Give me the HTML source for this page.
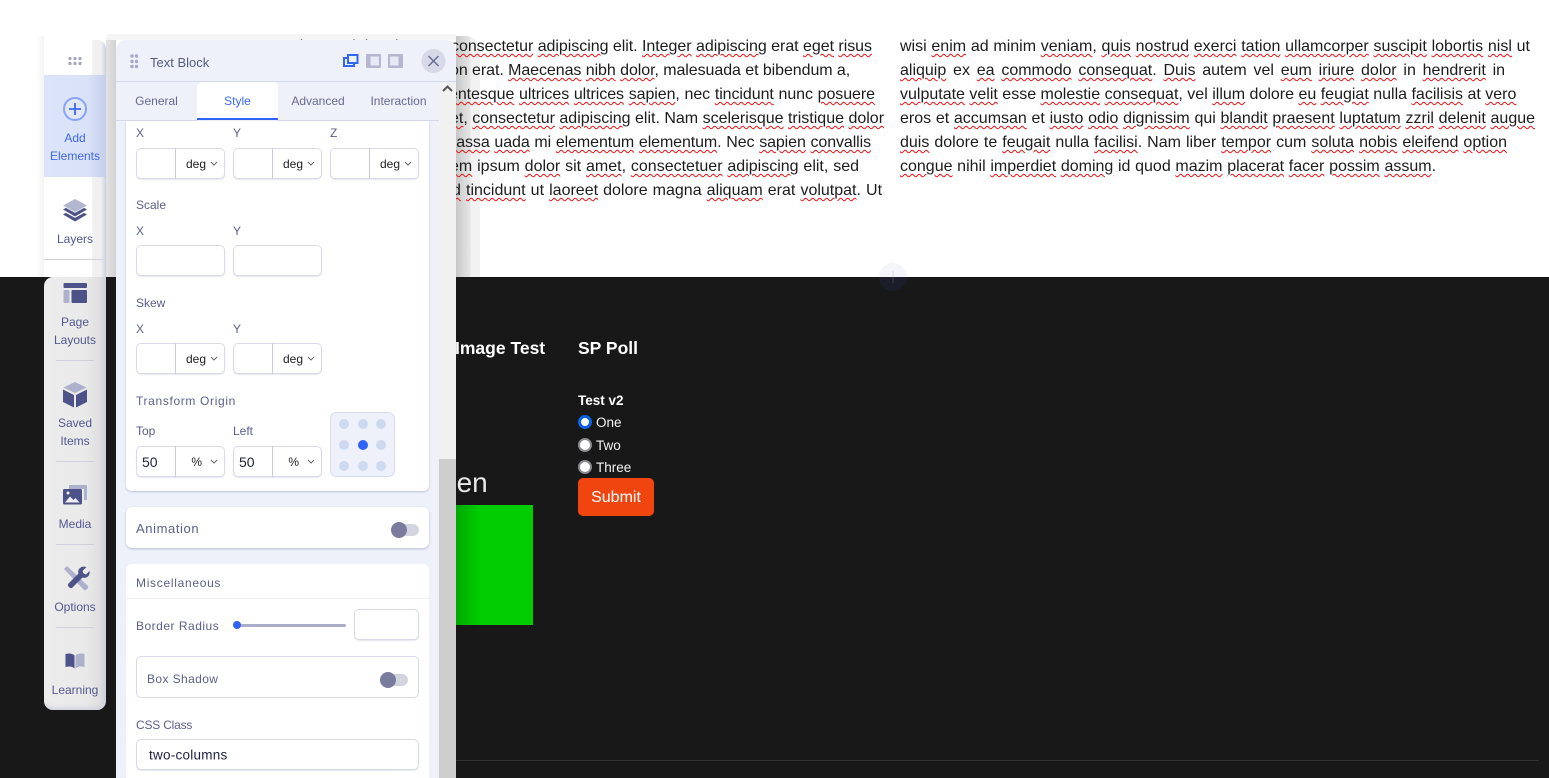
<!DOCTYPE html>
<html><head><meta charset="utf-8"><style>
*{box-sizing:border-box}
html,body{margin:0;padding:0;width:1549px;height:778px;overflow:hidden;background:#fff;font-family:"Liberation Sans",sans-serif}
.a{position:absolute}
.l{position:absolute;height:24px;line-height:24px;font-size:16px;color:#1c1c1c;white-space:nowrap;text-align:justify;text-align-last:justify}
u{text-decoration:underline wavy #e81010 1px;text-underline-offset:2px}
.lb{position:absolute;font-size:12px;line-height:14px;color:#5a5f8c;white-space:nowrap}
.in{position:absolute;background:#fff;border:1px solid #d9dae8;border-radius:5px;box-shadow:0 1px 1px #e6e7f0}
.in i{position:absolute;top:-1px;bottom:-1px;left:38px;width:1px;background:#c9cbdc}
.in b{position:absolute;right:18px;top:50%;transform:translateY(-50%);font:12px "Liberation Sans",sans-serif;color:#222}
.in span{position:absolute;left:5px;top:50%;transform:translateY(-50%);font-size:14px;color:#1c2140}
.in svg{position:absolute;right:6px;top:50%;margin-top:-3px}
.nav{position:absolute;left:44px;width:62px;text-align:center;font-size:12px;line-height:18px;color:#52588f}
.sep{position:absolute;left:56px;width:38px;height:1px;background:#cfd0de}
.tab{position:absolute;top:82px;height:38px;line-height:38px;text-align:center;font-size:12px;color:#666b90}
</style></head><body>
<div class="a" style="left:0;top:0;width:1549px;height:277px;background:#fff"></div>

<!-- dark section -->
<div class="a" style="left:0;top:277px;width:1549px;height:501px;background:#181818"></div>
<div class="a" style="left:879px;top:263px;width:28px;height:14px;border-radius:14px 14px 0 0;background:#f4f5fa"></div>
<div class="a" style="left:879px;top:277px;width:28px;height:14px;border-radius:0 0 14px 14px;background:#1b1e2a"></div>
<div class="a" style="left:892px;top:271px;width:2px;height:6px;background:#e6e8f0"></div>
<div class="a" style="left:892px;top:277px;width:2px;height:6px;background:#2c2e38"></div>
<div class="a" style="left:456px;top:760px;width:1083px;height:1px;background:#333"></div>
<div class="a" style="left:455px;top:337px;font-size:17.5px;line-height:22px;font-weight:bold;color:#fff;white-space:nowrap">Image Test</div>
<div class="a" style="left:578px;top:337px;font-size:17.5px;line-height:22px;font-weight:bold;color:#fff;white-space:nowrap">SP Poll</div>
<div class="a" style="left:578px;top:392px;font-size:13.5px;line-height:18px;font-weight:bold;color:#fff;white-space:nowrap">Test v2</div>
<div class="a" style="left:578px;top:415px;width:14px;height:14px;border-radius:50%;background:#fff;border:3px solid #0b62e0"></div>
<div class="a" style="left:578px;top:438px;width:14px;height:14px;border-radius:50%;background:#fff;border:2px solid #8a8a8f"></div>
<div class="a" style="left:578px;top:460px;width:14px;height:14px;border-radius:50%;background:#fff;border:2px solid #8a8a8f"></div>
<div class="a" style="left:596px;top:415px;font-size:13.5px;line-height:16px;color:#f4f4f4">One</div>
<div class="a" style="left:596px;top:438px;font-size:13.5px;line-height:16px;color:#f4f4f4">Two</div>
<div class="a" style="left:596px;top:460px;font-size:13.5px;line-height:16px;color:#f4f4f4">Three</div>
<div class="a" style="left:578px;top:478px;width:76px;height:38px;border-radius:5px;background:#f0450f;color:#fff;font-size:16px;line-height:39px;text-align:center">Submit</div>
<div class="a" style="left:399px;top:467px;font-size:28px;line-height:32px;color:#e8e8e8;white-space:nowrap">Screen</div>
<div class="a" style="left:400px;top:505px;width:133px;height:120px;background:linear-gradient(90deg,#00cc00 0,#00cc00 56px,#00a800 56px,#00b800 66px,#00cc00 78px)"></div>

<!-- shadows on the light part -->
<div class="a" style="left:456px;top:36px;width:24px;height:241px;border-radius:0 14px 0 0;background:linear-gradient(90deg,#c6c6c6,#d8d8d8 30%,#e6e6e6 60%,#f2f2f2 61%,#f2f2f2)"></div>
<div class="a" style="left:106px;top:34px;width:350px;height:6px;background:#f5f5f5"></div>
<div class="a" style="left:106px;top:40px;width:10px;height:237px;background:linear-gradient(90deg,#e2e2e2,#d2d2d2)"></div>
<div class="a" style="left:36px;top:36px;width:8px;height:241px;background:linear-gradient(90deg,#fff,#f3f3f3)"></div>

<!-- text columns -->
<div class="l" style="left:250px;top:35px;text-align-last:left">Lorem ipsum dolor sit amet,</div>
<div class="l" style="left:451px;width:421px;top:35px;letter-spacing:-.04px"><u>consectetur</u> <u>adipiscing</u> elit. <u>Integer</u> <u>adipiscing</u> erat <u>eget</u> <u>risus</u></div>
<div class="l" style="left:450px;width:400px;top:59px;letter-spacing:-.07px">on erat. <u>Maecenas</u> <u>nibh</u> <u>dolor</u>, malesuada et bibendum a,</div>
<div class="l" style="left:449px;width:426px;top:83px;letter-spacing:-.07px"><u>entesque</u> <u>ultrices</u> <u>ultrices</u> <u>sapien</u>, nec <u>tincidunt</u> nunc <u>posuere</u></div>
<div class="l" style="left:450px;width:434px;top:107px"><u>et</u>, <u>consectetur</u> <u>adipiscing</u> elit. Nam <u>scelerisque</u> <u>tristique</u> <u>dolor</u></div>
<div class="l" style="left:443px;width:428px;top:131px;letter-spacing:-.1px"><u>massa</u> <u>uada</u> mi <u>elementum</u> <u>elementum</u>. Nec <u>sapien</u> <u>convallis</u></div>
<div class="l" style="left:450px;width:409px;top:155px"><u>em</u> ipsum <u>dolor</u> sit <u>amet</u>, <u>consectetuer</u> <u>adipiscing</u> elit, sed</div>
<div class="l" style="left:452px;width:430px;top:179px"><u>d</u> <u>tincidunt</u> ut <u>laoreet</u> dolore magna <u>aliquam</u> erat <u>volutpat</u>. Ut</div>

<div class="l" style="left:900px;width:630px;top:35px">wisi <u>enim</u> ad minim <u>veniam</u>, <u>quis</u> <u>nostrud</u> <u>exerci</u> <u>tation</u> <u>ullamcorper</u> <u>suscipit</u> <u>lobortis</u> <u>nisl</u> ut</div>
<div class="l" style="left:900px;width:605px;top:59px"><u>aliquip</u> ex <u>ea</u> <u>commodo</u> <u>consequat</u>. <u>Duis</u> autem vel <u>eum</u> <u>iriure</u> <u>dolor</u> in <u>hendrerit</u> in</div>
<div class="l" style="left:900px;width:615px;top:83px"><u>vulputate</u> <u>velit</u> esse <u>molestie</u> <u>consequat</u>, vel <u>illum</u> dolore <u>eu</u> <u>feugiat</u> nulla <u>facilisis</u> at <u>vero</u></div>
<div class="l" style="left:900px;width:635px;top:107px">eros et <u>accumsan</u> et <u>iusto</u> <u>odio</u> <u>dignissim</u> qui <u>blandit</u> <u>praesent</u> <u>luptatum</u> <u>zzril</u> <u>delenit</u> <u>augue</u></div>
<div class="l" style="left:900px;width:607px;top:131px"><u>duis</u> dolore te <u>feugait</u> nulla <u>facilisi</u>. Nam liber <u>tempor</u> cum <u>soluta</u> <u>nobis</u> <u>eleifend</u> <u>option</u></div>
<div class="l" style="left:900px;width:536px;top:155px"><u>congue</u> nihil <u>imperdiet</u> <u>doming</u> id quod <u>mazim</u> <u>placerat</u> <u>facer</u> <u>possim</u> <u>assum</u>.</div>

<!-- left rail -->
<div class="a" style="left:44px;top:40px;width:62px;height:670px;border-radius:9px;background:linear-gradient(90deg,#ececec 0,#e9e9e9 70%,#dedede 90%,#c9cede 100%);box-shadow:inset 0 -5px 5px -3px #cdd0e0"></div>
<div class="a" style="left:44px;top:40px;width:62px;height:237px;background:linear-gradient(90deg,#fff 0,#fff 77%,#f1f1f1 78%,#efefef 92%,#c9d0e2 100%);border-radius:9px 9px 0 0"></div>
<div class="a" style="left:44px;top:277px;width:9px;height:9px;background:#181818"></div>
<div class="a" style="left:44px;top:277px;width:62px;height:24px;background:linear-gradient(90deg,#ececec 0,#e9e9e9 70%,#dedede 90%,#c9cede 100%);border-radius:9px 0 0 0"></div>
<div class="a" style="left:44px;top:75px;width:62px;height:102px;background:linear-gradient(90deg,#dbe4f9,#d9e2f7 70%,#c5cfeb 100%)"></div>

<svg class="a" style="left:0;top:0" width="130" height="720" viewBox="0 0 130 720">
 <g fill="#a2a6c0"><circle cx="70" cy="58.5" r="1.6"/><circle cx="75" cy="58.5" r="1.6"/><circle cx="80" cy="58.5" r="1.6"/><circle cx="70" cy="63.5" r="1.6"/><circle cx="75" cy="63.5" r="1.6"/><circle cx="80" cy="63.5" r="1.6"/></g>
 <circle cx="75" cy="109" r="11" fill="#e2e8fa" stroke="#88a3fb" stroke-width="2"/>
 <path d="M75 103v12M69 109h12" stroke="#3c68f5" stroke-width="1.8" fill="none"/>
 <!-- layers -->
 <path d="M75 199l12 6.500-12 6.500-12-6.500z" fill="#b3b6d0"/>
 <path d="M63 209.500l3-1.600 9 5 9-5 3 1.600-12 7z" fill="#4d5288"/>
 <path d="M63 214.500l3-1.600 9 5 9-5 3 1.600-12 7z" fill="#4d5288"/>
 <!-- page layouts -->
 <rect x="63.500" y="283" width="23.500" height="5" rx="1" fill="#4d5288"/>
 <rect x="63.500" y="290" width="6" height="13" rx="1" fill="#adb1cc"/>
 <rect x="71.500" y="290" width="15.500" height="13" rx="1" fill="#4d5288"/>
 <!-- box -->
 <path d="M75 382l11.500 5.500-11.500 5.500-11.500-5.500z" fill="#adb1cc"/>
 <path d="M63 389.500l11 5.500v12.500l-11-5.500z" fill="#4d5288"/>
 <path d="M87 389.500l-11 5.500v12.500l11-5.500z" fill="#4d5288"/>
 <!-- media -->
 <path d="M69 485h18v15h-3v-11h-15z" fill="#adb1cc"/>
 <rect x="63" y="489" width="19" height="15.500" rx="1.500" fill="#4d5288"/>
 <path d="M65 502.500l5-6 3.500 3.500 2-2 4 4.500z" fill="#eee"/>
 <circle cx="68" cy="493" r="1.500" fill="#eee"/>
 <!-- options -->
 <path d="M64 569l3-3 21 20c1 2-2 5-4 4z" fill="#adb1cc"/>
 <path d="M86.500 567l-4 4 1 2.500 2.500 1 3.500-3.500c1 4-2.500 8-7 6.500l-10 10c-2 2-6-1.500-4-4l10-10c-1.500-4 2.500-8 7.500-6.500z" fill="#4d5288"/>
 <!-- book -->
 <path d="M65.500 654c4-1 7-.5 9 1.500v13c-2-2-5-2.500-9-1.500z" fill="#4d5288"/>
 <path d="M84.500 654c-4-1-7-.5-9 1.500v13c2-2 5-2.500 9-1.500z" fill="#adb1cc"/>
</svg>

<div class="nav" style="top:129px;color:#3f66f0">Add<br>Elements</div>
<div class="nav" style="top:230px">Layers</div>
<div class="sep" style="top:259px;left:44px;width:60px"></div>
<div class="nav" style="top:313px">Page<br>Layouts</div>
<div class="sep" style="top:360px"></div>
<div class="nav" style="top:414px">Saved<br>Items</div>
<div class="sep" style="top:461px"></div>
<div class="nav" style="top:515px">Media</div>
<div class="sep" style="top:544px"></div>
<div class="nav" style="top:598px">Options</div>
<div class="sep" style="top:627px"></div>
<div class="nav" style="top:681px">Learning</div>

<!-- panel -->
<div class="a" style="left:116px;top:40px;width:340px;height:738px;background:#eef1fa;border-radius:10px 10px 0 0;overflow:hidden">
 <div class="a" style="left:323px;top:42px;width:17px;height:696px;background:#f1f1f1"></div>
 <div class="a" style="left:323px;top:419px;width:17px;height:319px;background:#cdcdcd"></div>
 <div class="a" style="left:0;top:41px;width:340px;height:1px;background:#d4d8ea"></div>
</div>
<svg class="a" style="left:440px;top:83px" width="15" height="12" viewBox="0 0 15 12"><path d="M3 8l4.500-4.500L12 8" fill="none" stroke="#555" stroke-width="2"/></svg>
<svg class="a" style="left:116px;top:40px" width="340" height="42" viewBox="116 40 340 42">
 <g fill="#a5a9c2"><circle cx="132" cy="56" r="1.700"/><circle cx="136.500" cy="56" r="1.700"/><circle cx="132" cy="61.500" r="1.700"/><circle cx="136.500" cy="61.500" r="1.700"/><circle cx="132" cy="66.500" r="1.700"/><circle cx="136.500" cy="66.500" r="1.700"/></g>
 <rect x="348" y="55" width="9.500" height="8" fill="none" stroke="#2f66f5" stroke-width="2"/>
 <path d="M347 58h-3v8h10v-2" fill="none" stroke="#2f66f5" stroke-width="2"/>
 <rect x="366" y="54" width="15" height="14" rx="1" fill="#b4b7cf"/><rect x="370.500" y="56.500" width="8.500" height="9" fill="#e6e8f3"/>
 <rect x="388" y="54" width="15" height="14" rx="1" fill="#b4b7cf"/><rect x="390" y="56.500" width="8.500" height="9" fill="#e6e8f3"/>
 <circle cx="433.500" cy="61" r="12" fill="#d6d9e7"/>
 <path d="M428.500 56l10 10M438.500 56l-10 10" stroke="#6c7095" stroke-width="1.500" fill="none"/>
</svg>
<div class="a" style="left:150px;top:55px;font-size:13px;line-height:16px;color:#565b80">Text Block</div>

<div class="tab" style="left:116px;width:81px">General</div>
<div class="tab" style="left:197px;width:81px;background:#fff;border-radius:5px 5px 0 0;color:#3c68f5;border-bottom:2px solid #2f62f5;line-height:38px">Style</div>
<div class="tab" style="left:278px;width:80px">Advanced</div>
<div class="tab" style="left:358px;width:81px">Interaction</div>
<div class="a" style="left:116px;top:120px;width:81px;height:1px;background:#d4d8ea"></div>
<div class="a" style="left:278px;top:120px;width:161px;height:1px;background:#d4d8ea"></div>

<!-- cards -->
<div class="a" style="left:126px;top:121px;width:303px;height:370px;background:#fff;border-radius:0 0 6px 6px;box-shadow:0 1px 2px #bcc2da"></div>
<div class="a" style="left:126px;top:507px;width:303px;height:41px;background:#fff;border-radius:6px;box-shadow:0 1px 2px #b4bbd6"></div>
<div class="a" style="left:126px;top:564px;width:303px;height:214px;background:#fff;border-radius:6px 6px 0 0"></div>
<div class="a" style="left:126px;top:598px;width:303px;height:1px;background:#eff0f6"></div>

<div class="lb" style="left:136px;top:126px">X</div><div class="lb" style="left:233px;top:126px">Y</div><div class="lb" style="left:330px;top:126px">Z</div>
<div class="in" style="left:136px;top:148px;width:89px;height:31px"><i></i><b>deg</b><svg width="8" height="6"><path d="M1 1l3 3 3-3" fill="none" stroke="#666" stroke-width="1"/></svg></div>
<div class="in" style="left:233px;top:148px;width:89px;height:31px"><i></i><b>deg</b><svg width="8" height="6"><path d="M1 1l3 3 3-3" fill="none" stroke="#666" stroke-width="1"/></svg></div>
<div class="in" style="left:330px;top:148px;width:89px;height:31px"><i></i><b>deg</b><svg width="8" height="6"><path d="M1 1l3 3 3-3" fill="none" stroke="#666" stroke-width="1"/></svg></div>

<div class="lb" style="left:136px;top:198px">Scale</div>
<div class="lb" style="left:136px;top:224px">X</div><div class="lb" style="left:233px;top:224px">Y</div>
<div class="in" style="left:136px;top:245px;width:89px;height:31px"></div>
<div class="in" style="left:233px;top:245px;width:89px;height:31px"></div>

<div class="lb" style="left:136px;top:296px">Skew</div>
<div class="lb" style="left:136px;top:322px">X</div><div class="lb" style="left:233px;top:322px">Y</div>
<div class="in" style="left:136px;top:343px;width:89px;height:31px"><i></i><b>deg</b><svg width="8" height="6"><path d="M1 1l3 3 3-3" fill="none" stroke="#666" stroke-width="1"/></svg></div>
<div class="in" style="left:233px;top:343px;width:89px;height:31px"><i></i><b>deg</b><svg width="8" height="6"><path d="M1 1l3 3 3-3" fill="none" stroke="#666" stroke-width="1"/></svg></div>

<div class="lb" style="left:136px;top:394px;letter-spacing:.65px">Transform Origin</div>
<div class="lb" style="left:136px;top:424px">Top</div><div class="lb" style="left:233px;top:424px">Left</div>
<div class="in" style="left:136px;top:446px;width:89px;height:31px"><i></i><span>50</span><b style="right:22px">%</b><svg width="8" height="6"><path d="M1 1l3 3 3-3" fill="none" stroke="#666" stroke-width="1"/></svg></div>
<div class="in" style="left:233px;top:446px;width:89px;height:31px"><i></i><span>50</span><b style="right:22px">%</b><svg width="8" height="6"><path d="M1 1l3 3 3-3" fill="none" stroke="#666" stroke-width="1"/></svg></div>

<svg class="a" style="left:330px;top:412px" width="65" height="65" viewBox="330 412 65 65">
 <rect x="330.500" y="412.500" width="64" height="64" rx="6" fill="#eef1fa" stroke="#d5dcf0"/>
 <g fill="#cdd9ee"><circle cx="344" cy="424" r="5"/><circle cx="363" cy="424" r="5"/><circle cx="381" cy="424" r="5"/><circle cx="344" cy="445" r="5"/><circle cx="381" cy="445" r="5"/><circle cx="344" cy="466" r="5"/><circle cx="363" cy="466" r="5"/><circle cx="381" cy="466" r="5"/></g>
 <circle cx="363" cy="445" r="5" fill="#2f62f5"/>
</svg>

<div class="lb" style="left:136px;top:522px;font-size:13px;letter-spacing:.6px">Animation</div>
<div class="a" style="left:393px;top:524px;width:26px;height:12px;border-radius:6px;background:#d2d5e0"></div>
<div class="a" style="left:391px;top:522px;width:16px;height:16px;border-radius:50%;background:#7a7c9e"></div>

<div class="lb" style="left:136px;top:576px;letter-spacing:.7px">Miscellaneous</div>
<div class="lb" style="left:136px;top:619px;letter-spacing:.5px">Border Radius</div>
<div class="a" style="left:234px;top:624px;width:112px;height:3px;border-radius:2px;background:#a9adc9"></div>
<div class="a" style="left:233px;top:621px;width:8px;height:8px;border-radius:50%;background:#2f62f5"></div>
<div class="in" style="left:354px;top:609px;width:65px;height:31px"></div>

<div class="in" style="left:136px;top:656px;width:283px;height:42px;box-shadow:none"></div>
<div class="lb" style="left:147px;top:672px;letter-spacing:.4px">Box Shadow</div>
<div class="a" style="left:382px;top:674px;width:26px;height:12px;border-radius:6px;background:#d2d5e0"></div>
<div class="a" style="left:380px;top:672px;width:16px;height:16px;border-radius:50%;background:#7a7c9e"></div>

<div class="lb" style="left:136px;top:718px;letter-spacing:-.2px">CSS Class</div>
<div class="in" style="left:136px;top:739px;width:283px;height:31px"><span style="left:12px;font-size:13.5px;letter-spacing:.25px">two-columns</span></div>
</body></html>
